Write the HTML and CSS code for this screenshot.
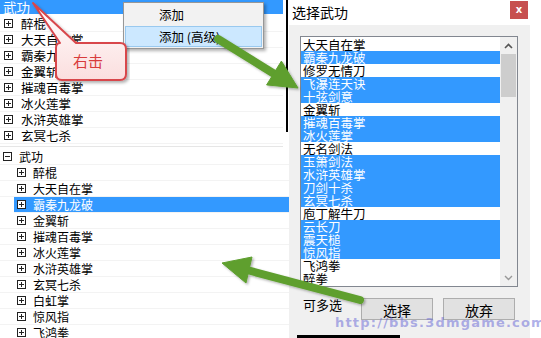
FILE: index.html
```html
<!DOCTYPE html>
<html lang="zh-CN">
<head>
    <meta charset="UTF-8">
    <meta name="viewport" content="width=device-width, initial-scale=1.0">
    <title>选择武功</title>
    <link rel="stylesheet" href="styles.css">
</head>
<body>
    <div class="screen">
        <div class="left">
            <div class="tree tree-top">
                <div class="node first sel">武功</div>
                <div class="node"><i class="box plus"></i>醉棍</div>
                <div class="node"><i class="box plus"></i>大天自在掌</div>
                <div class="node"><i class="box plus"></i>霸秦九龙破</div>
                <div class="node"><i class="box plus"></i>金翼斩</div>
                <div class="node"><i class="box plus"></i>摧魂百毒掌</div>
                <div class="node"><i class="box plus"></i>冰火莲掌</div>
                <div class="node"><i class="box plus"></i>水浒英雄掌</div>
                <div class="node"><i class="box plus"></i>玄冥七杀</div>
            </div>
            <div class="tree tree-bottom">
                <div class="node root"><i class="box minus"></i>武功</div>
                <div class="node child"><i class="box plus"></i>醉棍</div>
                <div class="node child"><i class="box plus"></i>大天自在掌</div>
                <div class="node child sel"><i class="box plus"></i>霸秦九龙破</div>
                <div class="node child"><i class="box plus"></i>金翼斩</div>
                <div class="node child"><i class="box plus"></i>摧魂百毒掌</div>
                <div class="node child"><i class="box plus"></i>冰火莲掌</div>
                <div class="node child"><i class="box plus"></i>水浒英雄掌</div>
                <div class="node child"><i class="box plus"></i>玄冥七杀</div>
                <div class="node child"><i class="box plus"></i>白虹掌</div>
                <div class="node child"><i class="box plus"></i>惊风指</div>
                <div class="node child"><i class="box plus"></i>飞鸿拳</div>
            </div>
        </div>

        <div class="dialog">
            <div class="titlebar">
                <span class="title">选择武功</span>
                <button type="button" class="close">x</button>
            </div>
            <div class="dialog-body">
                <div class="listbox">
                    <ul class="items">
                        <li>大天自在掌</li>
                        <li class="on">霸秦九龙破</li>
                        <li>修罗无情刀</li>
                        <li class="on">飞瀑连天诀</li>
                        <li class="on">十弦剑意</li>
                        <li>金翼斩</li>
                        <li class="on">摧魂百毒掌</li>
                        <li class="on">冰火莲掌</li>
                        <li>无名剑法</li>
                        <li class="on">玉箫剑法</li>
                        <li class="on">水浒英雄掌</li>
                        <li class="on">刀剑十杀</li>
                        <li class="on">玄冥七杀</li>
                        <li>庖丁解牛刀</li>
                        <li class="on">云长刀</li>
                        <li class="on">震天槌</li>
                        <li class="on">惊风指</li>
                        <li>飞鸿拳</li>
                        <li>醉拳</li>
                    </ul>
                    <div class="scrollbar">
                        <span class="arrow">
                            <svg width="9" height="6" viewBox="0 0 9 6"><path d="M1 5 L4.5 1.5 L8 5" fill="none" stroke="#555" stroke-width="1.6"/></svg>
                        </span>
                        <span class="thumb"></span>
                        <span class="track"></span>
                        <span class="arrow">
                            <svg width="9" height="6" viewBox="0 0 9 6"><path d="M1 1 L4.5 4.5 L8 1" fill="none" stroke="#999" stroke-width="1.4"/></svg>
                        </span>
                    </div>
                </div>
                <div class="actions">
                    <span class="hint">可多选</span>
                    <button type="button" class="btn">选择</button>
                    <button type="button" class="btn">放弃</button>
                </div>
            </div>
            <div class="taskbar-edge"></div>
        </div>

        <div class="gutter"></div>
    </div>

    <!-- overlays: context menu, callout, arrows, watermark -->
    <div class="menu">
        <div class="menu-item">添加</div>
        <div class="menu-item hover">添加 (高级)</div>
    </div>

    <div class="callout">
        <svg class="callout-shape" width="130" height="86" viewBox="0 0 130 86">
            <defs>
                <linearGradient id="pink" x1="0" y1="0" x2="0" y2="1">
                    <stop offset="0" stop-color="#ffffff"/>
                    <stop offset="1" stop-color="#fbdede"/>
                </linearGradient>
                <filter id="shade" x="-10%" y="-10%" width="130%" height="130%">
                    <feDropShadow dx="2" dy="2" stdDeviation="1.5" flood-color="#000" flood-opacity="0.3"/>
                </filter>
            </defs>
            <path d="M60 43 L33 3 L76 43 H120 Q126 43 126 49 V74 Q126 80 120 80 H62 Q56 80 56 74 V48 Q56 43 60 43 Z"
                  fill="url(#pink)" stroke="#d8474c" stroke-width="2" stroke-linejoin="round" filter="url(#shade)"/>
        </svg>
        <span class="callout-text">右击</span>
    </div>

    <svg class="arrows" width="541" height="338" viewBox="0 0 541 338">
        <defs>
            <filter id="ashade" x="-10%" y="-10%" width="130%" height="130%">
                <feDropShadow dx="1.5" dy="1.5" stdDeviation="1.2" flood-color="#000" flood-opacity="0.3"/>
            </filter>
        </defs>
        <g fill="#5e9f2f" stroke="#5e9f2f" filter="url(#ashade)">
            <line x1="218" y1="39" x2="276" y2="75" stroke-width="8" stroke-linecap="round"/>
            <polygon points="281.4,61.1 298,88 266.6,84.9" stroke-width="1" stroke-linejoin="round"/>
            <line x1="360" y1="300" x2="247" y2="270" stroke-width="8" stroke-linecap="round"/>
            <polygon points="252,257 222,263 246,283" stroke-width="1" stroke-linejoin="round"/>
        </g>
    </svg>

    <div class="watermark">http://bbs.3dmgame.com/</div>
</body>
</html>
```

FILE: styles.css
```css
body {
    margin: 0;
    width: 541px;
    height: 338px;
    overflow: hidden;
    position: relative;
    background: #fff;
    font-family: "Noto Sans CJK SC", "Noto Sans", sans-serif;
    color: #000;
}
.screen {
    display: flex;
    height: 338px;
}
.left {
    width: 289px;
    flex-shrink: 0;
    display: flex;
    flex-direction: column;
    background: linear-gradient(#000, #000) 286px 0 / 2px 132px no-repeat, #fff;
}
.tree {
    overflow: hidden;
}
.tree-top {
    height: 146px;
    width: 283px;
    font-size: 12.5px;
    border-bottom: 1px solid #e6e6e6;
}
.tree-bottom {
    flex: 1;
    padding-top: 2px;
    font-size: 12px;
}
.node {
    height: 15px;
    line-height: 15px;
    border-bottom: 1px solid #f3f3f3;
    display: flex;
    align-items: center;
    gap: 8px;
    padding-left: 4px;
    white-space: nowrap;
}
.node.first {
    height: 14px;
    line-height: 14px;
    font-size: 13.5px;
    padding-left: 3px;
    margin-bottom: 2px;
    border-bottom: none;
}
.node.sel {
    background: #3399ff;
    color: #fff;
}
.tree-bottom .node.root {
    padding-left: 3px;
    gap: 7px;
}
.tree-bottom .node.child {
    padding-left: 17px;
    gap: 7px;
}
.tree-bottom .node.sel {
    margin-left: 14px;
    padding-left: 3px;
}
.box {
    display: inline-block;
    width: 7px;
    height: 7px;
    border: 1px solid #222;
    flex-shrink: 0;
    background-color: #fff;
}
.box.plus {
    background: linear-gradient(#222, #222) center / 5px 1px no-repeat,
                linear-gradient(#222, #222) center / 1px 5px no-repeat,
                #fff;
}
.box.minus {
    background: linear-gradient(#222, #222) center / 5px 1px no-repeat, #fff;
}

.dialog {
    width: 241px;
    flex-shrink: 0;
    background: #f0f0f0;
    display: flex;
    flex-direction: column;
}
.titlebar {
    height: 25px;
    background: #fff;
    display: flex;
    justify-content: space-between;
    align-items: flex-start;
    padding: 0 2px 0 3px;
}
.title {
    font-size: 14px;
    line-height: 24px;
}
.close {
    margin-top: 1px;
    width: 18px;
    height: 18px;
    border: none;
    padding: 0;
    background: #c75050;
    color: #fff;
    font-family: "DejaVu Sans", sans-serif;
    font-size: 10px;
    font-weight: bold;
    line-height: 16px;
}
.dialog-body {
    padding: 11px 12px 0 11px;
}
.listbox {
    height: 249px;
    border: 1px solid #828790;
    background: #fff;
    display: flex;
    overflow: hidden;
}
.items {
    flex: 1;
    list-style: none;
    margin: 0;
    padding: 1px 0 0 0;
    font-size: 12.5px;
}
.items li {
    height: 13px;
    line-height: 13px;
    padding-left: 2px;
    white-space: nowrap;
}
.items li.on {
    background: #3399ff;
    color: #fff;
}
.scrollbar {
    width: 17px;
    background: #f0f0f0;
    display: flex;
    flex-direction: column;
}
.arrow {
    height: 17px;
    display: flex;
    align-items: center;
    justify-content: center;
}
.thumb {
    height: 43px;
    margin: 0 1px;
    background: #cdcdcd;
}
.track {
    flex: 1;
}
.actions {
    margin-top: 11px;
    display: flex;
    align-items: flex-start;
    gap: 10px;
}
.hint {
    width: 48px;
    padding-left: 3px;
    font-size: 13px;
    line-height: 16px;
    margin-top: -1px;
}
.btn {
    width: 72px;
    height: 22px;
    border: 1px solid #adadad;
    background: #e1e1e1;
    font-family: "Noto Sans CJK SC", sans-serif;
    font-size: 14px;
    line-height: 18px;
    padding: 2px 0 0 0;
    color: #000;
}
.taskbar-edge {
    margin-top: auto;
    margin-left: 8px;
    width: 103px;
    height: 3px;
    background: #000;
}
.gutter {
    flex: 1;
    background: #fff;
}

.menu {
    position: absolute;
    left: 123px;
    top: 2px;
    width: 137px;
    padding: 1px;
    background: #f2f2f2;
    border: 1px solid #979797;
    box-shadow: 2px 2px 3px rgba(0, 0, 0, 0.3);
    font-size: 12.5px;
}
.menu-item {
    height: 22px;
    line-height: 22px;
    padding-left: 34px;
}
.menu-item.hover {
    height: 19px;
    line-height: 19px;
    background: #cce8ff;
    border: 1px solid #99c9ef;
    padding-left: 33px;
}
.callout {
    position: absolute;
    left: 0;
    top: 0;
    width: 130px;
    height: 86px;
}
.callout-shape {
    position: absolute;
    left: 0;
    top: 0;
}
.callout-text {
    position: relative;
    display: block;
    padding: 51px 0 0 73px;
    font-size: 15px;
    line-height: 20px;
    color: #d83b3b;
}
.arrows {
    position: absolute;
    left: 0;
    top: 0;
    pointer-events: none;
}
.watermark {
    position: absolute;
    left: 335px;
    top: 315px;
    font-family: "DejaVu Sans", sans-serif;
    font-weight: bold;
    font-size: 13px;
    letter-spacing: 1.2px;
    color: rgba(110, 110, 215, 0.55);
    white-space: nowrap;
}
```
